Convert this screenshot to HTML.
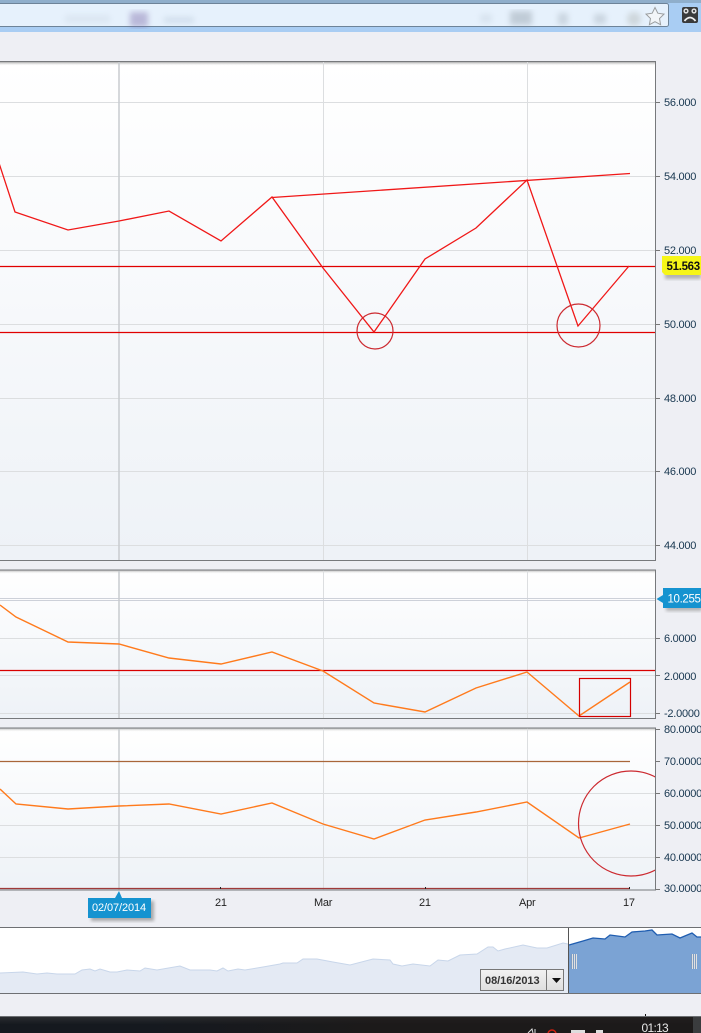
<!DOCTYPE html>
<html><head><meta charset="utf-8"><style>
html,body{margin:0;padding:0;background:#eeeff4;width:701px;height:1033px;overflow:hidden}
svg{display:block}
text{font-family:"Liberation Sans",sans-serif;font-size:11px;fill:#17364f;letter-spacing:-.25px}
</style></head><body>
<svg width="701" height="1033" viewBox="0 0 701 1033" xmlns="http://www.w3.org/2000/svg">
<defs>
<linearGradient id="p" x1="0" y1="0" x2="0" y2="1"><stop offset="0" stop-color="#fff"/><stop offset="1" stop-color="#eef2f7"/></linearGradient>
<linearGradient id="s" x1="0" y1="0" x2="0" y2="1"><stop offset="0" stop-color="#aaa"/><stop offset="1" stop-color="#fff" stop-opacity="0"/></linearGradient>
<linearGradient id="tb" x1="0" y1="0" x2="0" y2="1"><stop offset="0" stop-color="#2c2e31"/><stop offset=".5" stop-color="#15191f"/><stop offset="1" stop-color="#15191f"/></linearGradient>
<linearGradient id="tw" x1="0" y1="0" x2="1" y2="0"><stop offset="0" stop-color="#1f1a18" stop-opacity="0"/><stop offset=".4" stop-color="#1f1a18" stop-opacity=".7"/><stop offset="1" stop-color="#1f1a18" stop-opacity=".7"/></linearGradient>
<linearGradient id="bt" x1="0" y1="0" x2="0" y2="1"><stop offset="0" stop-color="#f2f2f2"/><stop offset="1" stop-color="#dedede"/></linearGradient>
<filter id="b"><feGaussianBlur stdDeviation="3"/></filter>
<filter id="sh"><feGaussianBlur stdDeviation="1.5"/></filter>
<clipPath id="c3"><rect x="0" y="729" width="655" height="161"/></clipPath>
</defs>

<!-- browser chrome -->
<rect width="701" height="32" fill="#a9cdf3"/>
<rect width="701" height="3" fill="#8faecb"/>
<rect x="-3" y="3.500" width="671.500" height="23" rx="2" fill="#e6f1fc" stroke="#6d8398"/>
<g filter="url(#b)" opacity=".42">
<rect x="130" y="12" width="18" height="15" fill="#7b6ba8"/>
<rect x="164" y="17" width="30" height="6" fill="#b6c4d6"/>
<rect x="65" y="15" width="45" height="8" fill="#cdd8e4"/>
<rect x="510" y="11" width="22" height="14" fill="#8e99a4"/>
<rect x="558" y="13" width="10" height="12" fill="#a5b0bb"/>
<rect x="594" y="14" width="12" height="10" fill="#a5b0bb"/>
<circle cx="634" cy="19" r="7" fill="#aeb3b0"/>
<rect x="480" y="14" width="12" height="9" fill="#c6d2de"/>
</g>
<path d="M655 7.500l2.800 5.700 6.200.9-4.500 4.400 1.100 6.200-5.600-3-5.600 3 1.100-6.200-4.500-4.400 6.200-.9z" fill="#f2f5f8" stroke="#9a9d9f" stroke-width="1"/>
<rect x="682" y="7" width="16" height="16" rx="2" fill="#3a3a3a"/>
<circle cx="686" cy="11" r="2.600" fill="#ddd"/><circle cx="694" cy="11" r="2.600" fill="#ddd"/>
<circle cx="686" cy="11" r="1" fill="#222"/><circle cx="694" cy="11" r="1" fill="#222"/>
<path d="M684.500 21q5.500-7 11 0" fill="none" stroke="#eee" stroke-width="1.800"/>

<!-- panel 1 -->
<rect x="0" y="62" width="655" height="498" fill="url(#p)"/>
<rect x="0" y="62" width="655" height="4" fill="url(#s)"/>
<g stroke="#dcdee0" stroke-width="1" fill="none">
<path d="M0 102.500H655M0 176.500H655M0 250.500H655M0 324.500H655M0 398.500H655M0 471.500H655M0 545.500H655"/>
<path d="M323.500 62V560M527.500 62V560"/>
</g>
<path d="M119 62V560" stroke="#c8cbcf" stroke-width="1.500"/>
<path d="M0 61.500H655.500V560.500H0" fill="none" stroke="#77797c" stroke-width="1"/>
<path d="M656 102.500h4M656 176.500h4M656 250.500h4M656 324.500h4M656 398.500h4M656 471.500h4M656 545.500h4" stroke="#777"/>
<path d="M0 266.500H655M0 332.500H655" stroke="#e00000" stroke-width="1.200"/>
<polyline points="-1,163 15,212 68,230 119,221 169,211 221,241 272,197 323,268 374,332 425,259 476,228 527,180 578,326 629,266" fill="none" stroke="#f01818" stroke-width="1.300"/>
<line x1="272" y1="197.500" x2="630" y2="173.500" stroke="#f01818" stroke-width="1.300"/>
<circle cx="375" cy="331" r="18" fill="none" stroke="#cc2a30" stroke-width="1.200"/>
<circle cx="578.500" cy="325.500" r="21.500" fill="none" stroke="#cc2a30" stroke-width="1.200"/>
<text x="664" y="106">56.000</text><text x="664" y="180">54.000</text><text x="664" y="254">52.000</text>
<text x="664" y="328">50.000</text><text x="664" y="402">48.000</text><text x="664" y="475">46.000</text><text x="664" y="549">44.000</text>
<rect x="665" y="259" width="36" height="20" fill="#8a8a8a" opacity=".6" filter="url(#sh)"/>
<path d="M662 256H701V275H665L662 272z" fill="#f6f618"/>
<text x="666.500" y="270" style="font-weight:bold;font-size:11.500px;fill:#111;letter-spacing:-.3px">51.563</text>

<!-- panel 2 -->
<rect x="0" y="570" width="655" height="148" fill="url(#p)"/>
<rect x="0" y="570" width="655" height="4" fill="url(#s)"/>
<g stroke="#dcdee0" fill="none">
<path d="M0 638.500H655M0 675.500H655M0 713.500H655"/>
<path d="M323.500 570V718M527.500 570V718"/>
</g>
<path d="M0 598.500H655M0 600.500H655" stroke="#cdd1d9"/>
<path d="M119 570V718" stroke="#c8cbcf" stroke-width="1.500"/>
<path d="M0 570H655.500V718.500H0" fill="none" stroke="#77797c"/>
<path d="M656 638.500h4M656 675.500h4M656 713.500h4" stroke="#777"/>
<path d="M0 670.500H655" stroke="#d80000" stroke-width="1.200"/>
<polyline points="0,605 16,617 68,642 119,644 169,658 221,664 272,652 323,671 374,703 425,712 476,688 527,672 579,716 630,682" fill="none" stroke="#ff7a1c" stroke-width="1.400"/>
<rect x="579.500" y="678.500" width="51" height="38" fill="none" stroke="#d40000" stroke-width="1.200"/>
<rect x="666" y="591" width="36" height="20" fill="#8a8a8a" opacity=".6" filter="url(#sh)"/>
<path d="M663 588H701V608H663V603L656.500 599L663 595z" fill="#1593d0"/>
<text x="667.500" y="602.500" style="font-size:11.500px;fill:#fff;letter-spacing:-.35px">10.255</text>
<text x="664" y="642">6.0000</text><text x="664" y="680">2.0000</text><text x="664" y="717">-2.0000</text>

<!-- panel 3 -->
<rect x="0" y="728" width="655" height="162" fill="url(#p)"/>
<rect x="0" y="728" width="655" height="4" fill="url(#s)"/>
<g stroke="#dcdee0" fill="none">
<path d="M0 793.500H655M0 825.500H655M0 857.500H655"/>
<path d="M323.500 728V890M527.500 728V890"/>
</g>
<path d="M119 728V890" stroke="#c8cbcf" stroke-width="1.500"/>
<path d="M0 761.500H630" stroke="#a9663a" stroke-width="1.200"/>
<path d="M0 888.500H630" stroke="#a03a3a" stroke-width="1.200"/>
<path d="M0 728H655.500V890H0" fill="none" stroke="#77797c"/>
<path d="M656 729.500h4M656 761.500h4M656 793.500h4M656 825.500h4M656 857.500h4M656 889.500h4" stroke="#777"/>
<polyline points="0,789 16,804 68,809 119,806 169,804 221,814 272,803 323,824 374,839 425,820 476,812 527,802 579,838 630,824" fill="none" stroke="#ff7a1c" stroke-width="1.400"/>
<circle cx="631" cy="823.500" r="52.500" fill="none" stroke="#cc2a30" stroke-width="1.200" clip-path="url(#c3)"/>
<text x="664" y="733">80.0000</text><text x="664" y="765">70.0000</text><text x="664" y="797">60.0000</text>
<text x="664" y="829">50.0000</text><text x="664" y="861">40.0000</text><text x="664" y="892">30.0000</text>
<path d="M220.500 889v-2M425.500 889v-2M629.500 889v-2" stroke="#222"/>

<!-- x-axis -->
<text x="215" y="906" style="fill:#222">21</text>
<text x="314" y="906" style="fill:#222">Mar</text>
<text x="419" y="906" style="fill:#222">21</text>
<text x="519" y="906" style="fill:#222">Apr</text>
<text x="623" y="906" style="fill:#222">17</text>
<rect x="91" y="901" width="63" height="20" fill="#8a8a8a" opacity=".7" filter="url(#sh)"/>
<path d="M88 898H115L119 891L122 898H151V918H88z" fill="#1593d0"/>
<text x="92" y="911" style="font-size:11px;fill:#fff;letter-spacing:-.1px">02/07/2014</text>

<!-- navigator -->
<rect x="0" y="928" width="701" height="65" fill="#fff"/>
<path d="M0 973L23 972 37 974 47 973 57 974 75 974 82 970 90 969 95 971 100 969 110 972 117 972 127 970 140 971 145 968 157 970 180 966 190 970 210 970 217 971 223 968 228 971 238 969 245 970 263 967 280 964 283 963 297 963 303 959 317 959 333 962 350 965 373 959 390 960 393 964 402 966 413 964 430 966 438 960 448 961 460 955 477 954 488 947 493 947 498 951 505 949 523 945 537 948 547 948 563 943 568 944V993H0z" fill="#e4eaf4"/>
<path d="M0 973L23 972 37 974 47 973 57 974 75 974 82 970 90 969 95 971 100 969 110 972 117 972 127 970 140 971 145 968 157 970 180 966 190 970 210 970 217 971 223 968 228 971 238 969 245 970 263 967 280 964 283 963 297 963 303 959 317 959 333 962 350 965 373 959 390 960 393 964 402 966 413 964 430 966 438 960 448 961 460 955 477 954 488 947 493 947 498 951 505 949 523 945 537 948 547 948 563 943 568 944" fill="none" stroke="#c8d6ea" stroke-width="1"/>
<path d="M569 945L583 941 593 938 605 939 610 935 625 937 632 932 645 931 652 930 657 935 672 934 680 938 692 933 697 937 701 937V993H569z" fill="#7ba3d4"/>
<path d="M569 945L583 941 593 938 605 939 610 935 625 937 632 932 645 931 652 930 657 935 672 934 680 938 692 933 697 937 701 937" fill="none" stroke="#1f5db0" stroke-width="1.300"/>
<path d="M0 927.500H701M0 993.500H701" stroke="#6e7073"/>
<path d="M568.500 928V993" stroke="#555"/>
<g stroke="#fff" stroke-width="1"><path d="M572.500 954v15M574.500 954v15M576.500 954v15M692.500 954v15M694.500 954v15M696.500 954v15"/></g>
<path d="M572 954v15M574 954v15M576 954v15M692 954v15M694 954v15M696 954v15" stroke="#888" stroke-width=".5"/>
<rect x="480.500" y="969.500" width="83" height="21" fill="url(#bt)" stroke="#777"/>
<path d="M546.500 970V990" stroke="#777"/>
<text x="485" y="984" style="font-size:11px;font-weight:bold;fill:#333;letter-spacing:-.05px">08/16/2013</text>
<path d="M552 978H561L556.500 983z" fill="#111"/>

<!-- taskbar -->
<rect x="0" y="1016" width="701" height="17" fill="url(#tb)"/>
<rect x="150" y="1017" width="551" height="16" fill="url(#tw)"/>
<path d="M0 1016.500H701" stroke="#6c6f72"/>
<path d="M645.500 1014v2" stroke="#111"/>
<rect x="693" y="1017" width="8" height="16" fill="#3a3c3e"/>
<path d="M528 1033l4-4 1 4M535 1029v4" stroke="#ddd" fill="none"/>
<circle cx="552" cy="1034" r="4" fill="none" stroke="#d02010" stroke-width="1.500"/>
<rect x="571" y="1030" width="14" height="3" fill="#ddd"/>
<rect x="596" y="1030" width="7" height="3" fill="#ddd"/>
<text x="641.500" y="1032" style="font-size:12px;fill:#e8e8e8;letter-spacing:-.7px">01:13</text>
</svg>
</body></html>
